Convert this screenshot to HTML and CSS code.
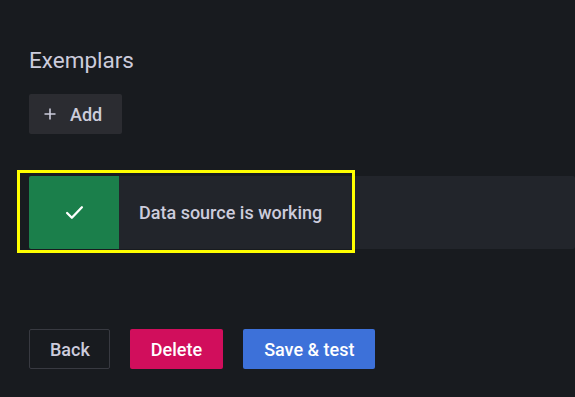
FILE: index.html
```html
<!DOCTYPE html>
<html>
<head>
	<title>Data source settings</title>
	<link rel="stylesheet" href="styles.css">
</head>
<body>
	<div class="page">
		<h3 class="section-title">Exemplars</h3>
		<button class="btn btn-secondary btn-add">
			<svg class="btn-icon" width="16" height="16" viewBox="0 0 16 16">
				<path d="M8 2.5v11M2.5 8h11" stroke="#ccccdc" stroke-width="1.6" fill="none"/>
			</svg>
			<span>Add</span>
		</button>

		<div class="alert">
			<div class="alert-icon">
				<svg width="19" height="15" viewBox="0 0 18 14">
					<path d="M2 7.5l4.5 4.5L16 2" stroke="#fff" stroke-width="2.2" fill="none" stroke-linecap="round" stroke-linejoin="round"/>
				</svg>
			</div>
			<div class="alert-text">Data source is working</div>
			<div class="highlight"></div>
		</div>

		<div class="actions">
			<button class="btn btn-outline">Back</button>
			<button class="btn btn-danger">Delete</button>
			<button class="btn btn-primary">Save &amp; test</button>
		</div>
	</div>
</body>
</html>
```

FILE: styles.css
```css
html {
  box-sizing: border-box;
}

*, *::before, *::after {
  box-sizing: inherit;
  margin: 0;
  padding: 0;
}

body {
  font-family: Roboto, 'Liberation Sans', sans-serif;
  background-color: #181b1f;
  color: #ccccdc;
  overflow: hidden;
}

.page {
  padding: 47px 0 0 29px;
}

.section-title {
  font-size: 22.5px;
  font-weight: 400;
  line-height: 26px;
  margin-bottom: 21px;
}

.btn {
  height: 40px;
  border: none;
  border-radius: 2px;
  font-family: inherit;
  font-size: 18px;
  font-weight: 500;
  padding: 0 21px;
  display: inline-flex;
  align-items: center;
  cursor: pointer;
}

.btn-secondary {
  background-color: #2b2c31;
  color: #ccccdc;
}

.btn-add {
  padding: 0 20px 0 13px;
  gap: 12px;
}

.alert {
  position: relative;
  margin-top: 42px;
  height: 73px;
  display: flex;
  align-items: center;
  background-color: #22252b;
  border-radius: 2px;
}

.alert-icon {
  width: 90px;
  height: 100%;
  background-color: #1b7f4b;
  border-radius: 2px 0 0 2px;
  display: flex;
  align-items: center;
  justify-content: center;
}

.alert-text {
  padding-left: 20px;
  font-size: 18px;
  font-weight: 500;
}

.highlight {
  position: absolute;
  left: -12px;
  top: -6px;
  width: 338px;
  height: 83px;
  border: 3px solid #ffff00;
}

.actions {
  margin-top: 80px;
  display: flex;
  gap: 20px;
}

.btn-outline {
  background-color: transparent;
  border: 1px solid #383a41;
  color: #ccccdc;
  padding: 0 19px 0 20px;
}

.btn-danger {
  background-color: #d10e5c;
  color: #fff;
}

.btn-primary {
  background-color: #3d71d9;
  color: #fff;
}
```
